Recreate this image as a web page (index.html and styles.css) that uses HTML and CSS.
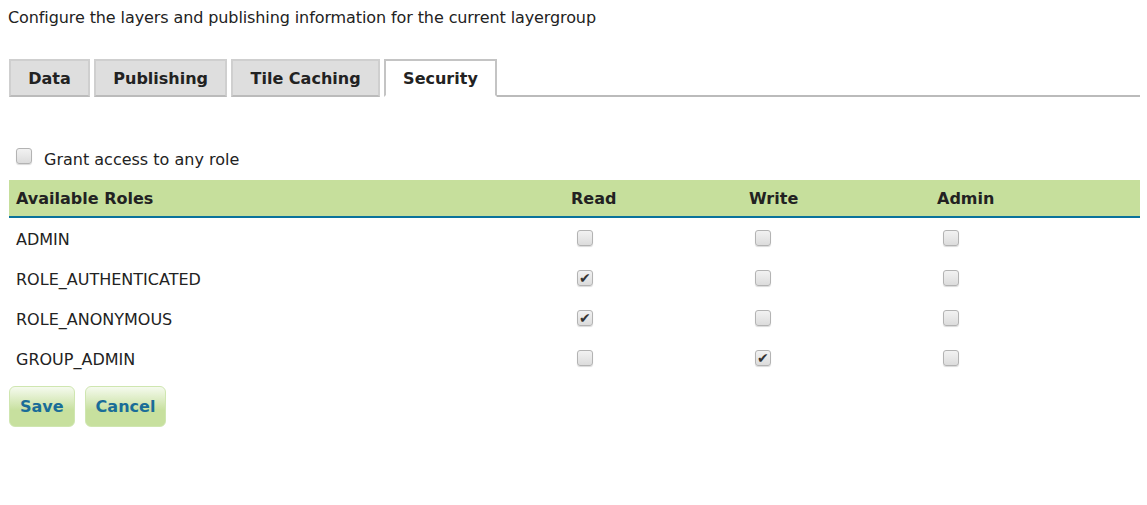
FILE: index.html
```html
<!DOCTYPE html>
<html>
<head>
<meta charset="utf-8">
<link rel="stylesheet" href="styles.css">
</head>
<body>
<div class="page">
  <p class="intro">Configure the layers and publishing information for the current layergroup</p>
  <ul class="tabs">
    <li class="tab">Data</li>
    <li class="tab">Publishing</li>
    <li class="tab">Tile Caching</li>
    <li class="tab active">Security</li>
    <li class="tab-fill"></li>
  </ul>
  <label class="grant"><span class="cb"></span>Grant access to any role</label>
  <div class="table">
    <div class="row head">
      <div class="cell">Available Roles</div>
      <div class="cell">Read</div>
      <div class="cell">Write</div>
      <div class="cell">Admin</div>
    </div>
    <div class="row">
      <div class="cell">ADMIN</div>
      <div class="cell"><span class="cb"></span></div>
      <div class="cell"><span class="cb"></span></div>
      <div class="cell"><span class="cb"></span></div>
    </div>
    <div class="row">
      <div class="cell">ROLE_AUTHENTICATED</div>
      <div class="cell"><span class="cb on"></span></div>
      <div class="cell"><span class="cb"></span></div>
      <div class="cell"><span class="cb"></span></div>
    </div>
    <div class="row">
      <div class="cell">ROLE_ANONYMOUS</div>
      <div class="cell"><span class="cb on"></span></div>
      <div class="cell"><span class="cb"></span></div>
      <div class="cell"><span class="cb"></span></div>
    </div>
    <div class="row">
      <div class="cell">GROUP_ADMIN</div>
      <div class="cell"><span class="cb"></span></div>
      <div class="cell"><span class="cb on"></span></div>
      <div class="cell"><span class="cb"></span></div>
    </div>
  </div>
  <div class="buttons">
    <button class="btn">Save</button>
    <button class="btn">Cancel</button>
  </div>
</div>
</body>
</html>
```

FILE: styles.css
```css
html, body {
  margin: 0;
  padding: 0;
  background: #fff;
}
body {
  font-family: "DejaVu Sans", Verdana, sans-serif;
  font-size: 16px;
  color: #222;
}
.page {
  padding: 0 7px 0 9px;
}
.intro {
  margin: 0;
  padding-top: 8px;
  height: 20px;
  line-height: 20px;
  margin-left: -1px;
  color: #222;
  letter-spacing: -0.1px;
}
.tabs {
  list-style: none;
  margin: 31px 0 0 0;
  padding: 0;
  display: flex;
  gap: 4px;
  height: 38px;
  align-items: stretch;
}
.tab {
  background: #dedede;
  border: 2px solid #cfcfcf;
  border-bottom: 2px solid #bbb;
  padding: 1px 17.25px 0;
  font-weight: bold;
  font-size: 16px;
  line-height: 34px;
  color: #222;
}
.tab.active {
  background: #fff;
  border: 2px solid #c4c4c4;
  border-bottom: 2px solid #fff;
}
.tab-fill {
  flex: 1;
  border-bottom: 2px solid #bbb;
  margin-left: -4px;
}
.grant {
  display: flex;
  align-items: center;
  margin-top: 51px;
  padding-left: 7px;
  height: 22px;
  color: #222;
}
.grant .cb {
  margin-right: 12px;
  top: -3px;
}
.cb {
  display: inline-block;
  width: 14px;
  height: 14px;
  border: 1px solid #b3b3b3;
  border-radius: 3px;
  background: linear-gradient(#f2f2f2, #dcdcdc);
  box-shadow: 0 1px 1px rgba(0,0,0,0.15);
  position: relative;
  vertical-align: middle;
}
.cb.on::after {
  content: "\2714";
  position: absolute;
  left: 1px;
  top: -1px;
  font-size: 14px;
  line-height: 16px;
  color: #333;
}
.table {
  margin-top: 10px;
}
.row {
  display: grid;
  grid-template-columns: 555px 178px 188px 1fr;
  height: 40px;
  align-items: center;
}
.row.head {
  background: #c6df9c;
  border-bottom: 2px solid #0a739b;
  height: 36px;
  font-weight: bold;
  color: #222;
}
.cell {
  padding-left: 7px;
  padding-top: 2px;
}
.row.head .cell {
  padding-top: 1px;
}
.row .cell .cb {
  margin-left: 6px;
  top: -2px;
}
.buttons {
  display: flex;
  gap: 10px;
  margin-top: 8px;
}
.btn {
  font-family: "DejaVu Sans", Verdana, sans-serif;
  font-weight: bold;
  font-size: 16px;
  color: #1a6d98;
  height: 41px;
  padding: 0 10px;
  border: 1px solid #cfe6b0;
  border-radius: 6px;
  background: linear-gradient(#f5faee, #c7e09e 60%);
  cursor: pointer;
}
```
